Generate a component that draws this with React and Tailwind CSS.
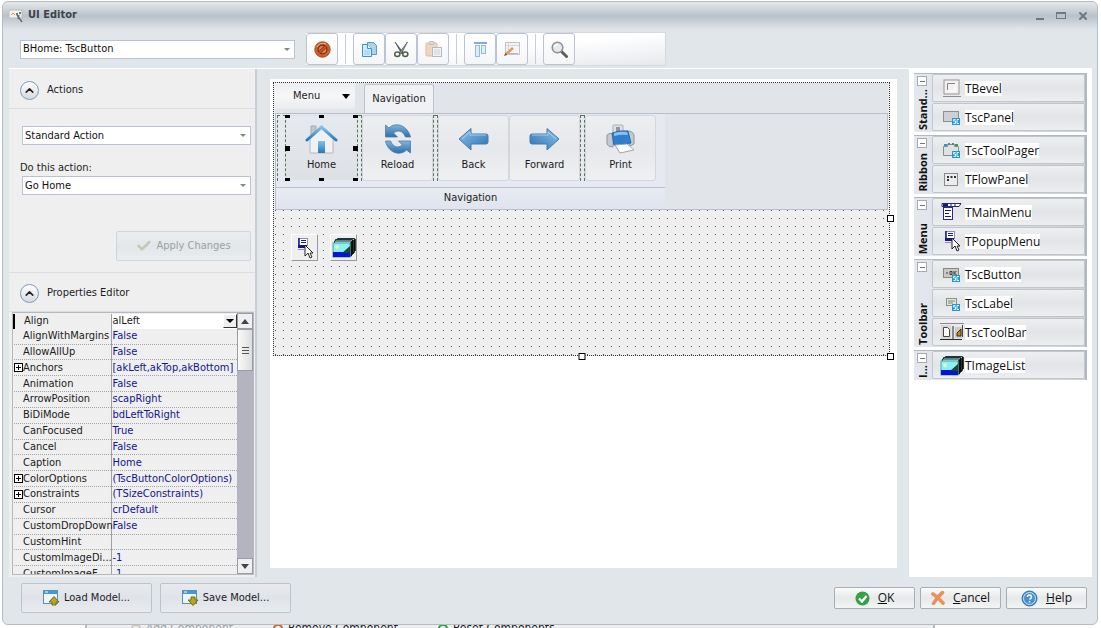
import { ChevronUp, X, Check } from "lucide-react";

const properties = [
  ["AlignWithMargins", "False"],
  ["AllowAllUp", "False"],
  ["Anchors", "[akLeft,akTop,akBottom]", true],
  ["Animation", "False"],
  ["ArrowPosition", "scapRight"],
  ["BiDiMode", "bdLeftToRight"],
  ["CanFocused", "True"],
  ["Cancel", "False"],
  ["Caption", "Home"],
  ["ColorOptions", "(TscButtonColorOptions)", true],
  ["Constraints", "(TSizeConstraints)", true],
  ["Cursor", "crDefault"],
  ["CustomDropDown", "False"],
  ["CustomHint", ""],
  ["CustomImageDi...", "-1"],
  ["CustomImageF...", "-1"],
];

/* ---------- icons ---------- */

const AppIcon = () => (
  <svg width="15" height="14" viewBox="0 0 15 14">
    <rect x="0" y="1" width="13" height="8" fill="#f3f1ea" stroke="#b9bcc0" />
    <path d="M2 6l2-2 2 2" stroke="#e8924a" fill="none" />
    <path d="M7 5h2M10 4h2" stroke="#6c7a88" strokeWidth="2" />
    <path d="M8 6l5 7M10 6l-1 4" stroke="#6a6d70" strokeWidth="1.5" />
  </svg>
);

const BanIcon = () => (
  <svg width="17" height="17" viewBox="0 0 17 17">
    <circle cx="8.5" cy="8.5" r="7.7" fill="#cf5f2b" stroke="#a04a20" />
    <circle cx="8.5" cy="8.5" r="4.4" fill="#dd8350" stroke="#7c3113" strokeWidth="1.2" />
    <path d="M5.4 11.6l6.2-6.2" stroke="#7c3113" strokeWidth="3" />
    <path d="M5.4 11.6l6.2-6.2" stroke="#cf5f2b" strokeWidth="1.4" />
    <path d="M3 6a6.5 6.5 0 0 1 9-3" stroke="#f2b48c" fill="none" />
  </svg>
);

const CopyIcon = () => (
  <svg width="17" height="17" viewBox="0 0 17 17">
    <path d="M6.5 1.5h6l3 3v9h-9z" fill="#a9d3ee" stroke="#5b9bc8" />
    <path d="M1.5 3.500h5l4 4v8h-9z" fill="#d3ebf9" stroke="#4a8fc2" />
    <path d="M6.5 3.500v4h4" fill="#fff" stroke="#4a8fc2" />
    <path d="M3 9h6v5H3z" fill="#b4daf2" />
  </svg>
);

const CutIcon = () => (
  <svg width="17" height="17" viewBox="0 0 17 17">
    <path d="M2 1l8.500 11-2 .5z" fill="#555d5a" stroke="#3c4442" strokeWidth="0.6" />
    <path d="M14.500 1L6 12l2.500.5z" fill="#8d9593" stroke="#3c4442" strokeWidth="0.6" />
    <ellipse cx="4.300" cy="13.300" rx="2.600" ry="2.200" fill="none" stroke="#4c6049" strokeWidth="1.500" />
    <ellipse cx="12.300" cy="13.300" rx="2.600" ry="2.200" fill="none" stroke="#4c6049" strokeWidth="1.500" />
  </svg>
);

const PasteIcon = () => (
  <svg width="17" height="17" viewBox="0 0 17 17">
    <rect x="1" y="2" width="11" height="13" rx="1" fill="#f0d6bc" stroke="#e0bb9c" />
    <rect x="4" y="0.5" width="5" height="3" rx="1" fill="#d8dadd" stroke="#bcbfc3" />
    <rect x="7.5" y="6.5" width="9" height="9" fill="#f2f3f4" stroke="#b6babf" />
    <path d="M9 9h6M9 11h6M9 13h6" stroke="#cfd2d5" />
  </svg>
);

const AlignIcon = () => (
  <svg width="15" height="15" viewBox="0 0 15 15">
    <path d="M1 1h13" stroke="#7eb0da" strokeWidth="2" />
    <rect x="2.500" y="3.500" width="4" height="11" fill="#dcedfa" stroke="#8fbce0" />
    <rect x="8.500" y="3.500" width="4" height="8" fill="#dcedfa" stroke="#8fbce0" />
  </svg>
);

const DesignIcon = () => (
  <svg width="17" height="16" viewBox="0 0 17 16">
    <rect x="1.500" y="1.500" width="14" height="12" fill="#f4f3f5" stroke="#c4c2c8" />
    <path d="M4.500 2v11M2 4.500h13" stroke="#d6d5da" />
    <path d="M2 13l7-6" stroke="#e29a56" strokeWidth="2.500" />
    <path d="M0 15l1.500-3L3 14z" fill="#6b4a2a" />
    <path d="M4 12.500h10" stroke="#c3b3bf" />
  </svg>
);

const FindIcon = () => (
  <svg width="17" height="17" viewBox="0 0 17 17">
    <path d="M10.500 10.500l5 5" stroke="#5b5f58" strokeWidth="3" strokeLinecap="round" />
    <circle cx="6.500" cy="6.500" r="5.300" fill="#e6eaec" stroke="#8c9194" strokeWidth="1.500" />
    <path d="M3.500 6a3.500 3.500 0 0 1 3-2.500" stroke="#fff" fill="none" strokeWidth="1.500" />
  </svg>
);

const HomeIcon = () => (
  <svg width="33" height="30" viewBox="0 0 33 30">
    <defs>
      <linearGradient id="homeBlue" x1="0" y1="0" x2="0" y2="1">
        <stop offset="0" stopColor="#7fc4f0" />
        <stop offset="1" stopColor="#2478bd" />
      </linearGradient>
    </defs>
    <path d="M6 2h5v9H6z" fill="#c3c6c9" stroke="#a9acaf" />
    <path d="M5 15L16.500 5 28 15v14H5z" fill="#f0f1f3" stroke="#b4b8bc" />
    <path d="M2 16L16.500 3 31 16" fill="none" stroke="url(#homeBlue)" strokeWidth="3" strokeLinecap="round" />
    <rect x="13" y="17" width="7" height="12" fill="url(#homeBlue)" />
  </svg>
);

const ReloadIcon = () => (
  <svg width="28" height="32" viewBox="0 0 28 32">
    <defs>
      <linearGradient id="arrowBlue" x1="0" y1="0" x2="0" y2="1">
        <stop offset="0" stopColor="#7fb4dc" />
        <stop offset="1" stopColor="#2f6cab" />
      </linearGradient>
    </defs>
    <path d="M1.500 2v12h12l-4-4c4-3 9-3 12 4h5C24 3 12-2 5 5z" fill="url(#arrowBlue)" stroke="#4c7ba8" strokeWidth="0.800" />
    <path d="M26.500 30V18h-12l4 4c-4 3-9 3-12-4h-5c2 11 14 16 21 9z" fill="url(#arrowBlue)" stroke="#4c7ba8" strokeWidth="0.800" />
  </svg>
);

const ArrowIcon = ({ flip }) => (
  <svg width="31" height="25" viewBox="0 0 31 25" className={flip ? "-scale-x-100" : ""}>
    <defs>
      <linearGradient id="backBlue" x1="0" y1="0" x2="1" y2="1">
        <stop offset="0" stopColor="#8fc8ee" />
        <stop offset="1" stopColor="#2a6cae" />
      </linearGradient>
    </defs>
    <path
      d="M1 12L13 1.500V7h15q2 0 2 2v6q0 2-2 2H13v6z"
      fill="url(#backBlue)"
      stroke="#4a78a6"
      strokeLinejoin="round"
    />
    <path d="M4 12l8-7v3h16" fill="none" stroke="#b4dbf4" strokeWidth="0.800" />
  </svg>
);

const PrintIcon = () => (
  <svg width="30" height="30" viewBox="0 0 30 30">
    <path d="M7 2q0-1 1-1h8q1 0 1 1v8H7z" fill="#dfe2e5" stroke="#a9aeb4" />
    <path d="M10 3h4v6h-4z" fill="#8f959c" />
    <path d="M1 11q3-3 6-1v13q-5 0-6-3z" fill="#c3c9d0" stroke="#8e98a4" />
    <path d="M21 7q6 0 7 4v9l-4 2z" fill="#c3c9d0" stroke="#8e98a4" />
    <path d="M6 9q8-3 16-2l3 12-17 2z" fill="#2f7fd0" stroke="#2a68ab" />
    <path d="M8 9q7-2 13-1l1 3q-7-1-14 1z" fill="#8cc1ee" />
    <path d="M9 21l12-1 7 6-14 3z" fill="#fff" stroke="#9fa5ac" />
  </svg>
);

const MenuIcon = () => (
  <svg width="22" height="20" viewBox="0 0 22 20">
    <path d="M1 1.500h19l-2 3H1z" fill="#fff" stroke="#2a2a6e" />
    <path d="M2 3h5" stroke="#15158c" strokeWidth="2" />
    <path d="M9 3h2M13 3h2" stroke="#15158c" />
    <rect x="2.500" y="5.500" width="9" height="12" fill="#fff" stroke="#2a2a8c" />
    <path d="M4 8.500h6M4 11.500h4M4 14.500h6" stroke="#15158c" />
  </svg>
);

const PopupIcon = () => (
  <svg width="20" height="22" viewBox="0 0 20 22">
    <rect x="3.500" y="1.500" width="9" height="7" fill="#fff" stroke="#8d8db0" />
    <path d="M4 1v8" stroke="#15158c" strokeWidth="1.500" />
    <path d="M6 3.500h5M6 5.500h5" stroke="#15158c" />
    <path d="M3 8h9v3H3z" fill="#15158c" />
    <path d="M3 12.500h6" stroke="#8d8db0" />
    <path d="M10 8v11l3-3 2 5 2-1-2-4h3z" fill="#fff" stroke="#222" />
  </svg>
);

const ImageListIcon = () => (
  <svg width="24" height="21" viewBox="0 0 24 21">
    <path d="M5.500 1.500h17v14h-17z" fill="#9bd0cf" stroke="#1d3438" />
    <path d="M3.500 2.500h17v15h-17z" fill="#9bd0cf" stroke="#1d3438" />
    <path d="M2.500 4h17v15h-17z" fill="#b5e6e4" stroke="#1d3438" />
    <path d="M21 3v14M19 5v14M23 2v12" stroke="#000" strokeWidth="1.500" />
    <rect x="1" y="6" width="17" height="14" fill="#8af2f4" stroke="#4aa6a8" />
    <path d="M18 9v7h-8z" fill="#1f4a32" />
    <path d="M1 15h9l4 1h4v4H1z" fill="#0a12d8" />
    <path d="M5 8v4M3 10h4" stroke="#fdf6b0" strokeWidth="1.500" />
  </svg>
);

const ScBadge = () => (
  <>
    <rect x="9" y="9" width="8" height="7" fill="#1f9ad8" />
    <path d="M12.500 10.500h-2v1.500h2v2.500h-2M16 10.500h-2v4h2" stroke="#fff" strokeWidth="0.900" fill="none" />
  </>
);

const PanelIcon = () => (
  <svg width="17" height="17" viewBox="0 0 17 17">
    <rect x="0.500" y="2.500" width="15" height="10" fill="#cfd0d1" stroke="#8d9093" />
    <ScBadge />
  </svg>
);

const BevelIcon = () => (
  <svg width="20" height="19" viewBox="0 0 20 19">
    <rect x="2" y="1" width="15" height="14" fill="#f2f2f2" stroke="#9b9499" />
    <path d="M5.500 11V4.500H13" stroke="#8a8388" fill="none" />
    <path d="M13 5v7H6" stroke="#fff" fill="none" />
    <path d="M1 17.500h18" stroke="#918a90" />
  </svg>
);

const PagerIcon = () => (
  <svg width="17" height="17" viewBox="0 0 17 17">
    <path d="M0.500 4.500h4v-2h7v2h4v9H0.500z" fill="#dfe1e3" stroke="#8a8e92" />
    <path d="M1 3h3" stroke="#1f9ad8" strokeWidth="2" />
    <path d="M12 3h3" stroke="#35a050" strokeWidth="2" />
    <path d="M5 2h2M9 2h2" stroke="#777" strokeWidth="2" />
    <ScBadge />
  </svg>
);

const FlowIcon = () => (
  <svg width="17" height="15" viewBox="0 0 17 15">
    <rect x="1.500" y="1.500" width="13" height="12" fill="#ececec" stroke="#888b8f" />
    <path d="M4 5h2M7.500 5h2M11 5h2M4 8h2" stroke="#333" strokeWidth="2" />
  </svg>
);

const ButtonIcon = () => (
  <svg width="17" height="17" viewBox="0 0 17 17">
    <rect x="0.500" y="2.500" width="15" height="9" fill="#c9c8c4" stroke="#85868a" />
    <path d="M3 7h2M7 5.500h2v3H7zM11 5v4M13.500 5l-2 2 2 2" stroke="#3f3a30" fill="none" />
    <ScBadge />
  </svg>
);

const LabelIcon = () => (
  <svg width="17" height="17" viewBox="0 0 17 17">
    <rect x="3.500" y="3.500" width="10" height="7" fill="#e2e5dc" stroke="#8b9189" />
    <path d="M5 6h7M5 8h5" stroke="#7e857c" />
    <ScBadge />
  </svg>
);

const ToolBarIcon = () => (
  <svg width="24" height="18" viewBox="0 0 24 18">
    <path d="M0 0.500h24" stroke="#8d8a8c" />
    <rect x="1" y="2" width="10" height="14" fill="#d7d5d5" />
    <path d="M3.500 4.500h4l2 2v7h-6z" fill="#fff" stroke="#444" />
    <path d="M13 3v14M0 16.500h22" stroke="#2b2b2b" />
    <rect x="15" y="4" width="7" height="11" fill="#cfccc8" />
    <path d="M17 10l4-4v7h-4z" fill="#c08a1a" stroke="#3a2a10" />
    <path d="M22.500 2v12" stroke="#444" />
  </svg>
);

const ModelIcon = ({ down }) => (
  <svg width="17" height="16" viewBox="0 0 17 16">
    <rect x="0.500" y="0.500" width="14" height="13" fill="#eef6fb" stroke="#5b8fb4" />
    <path d="M1 2.500h13" stroke="#3f9bd6" strokeWidth="3" />
    <path d="M2 2h3" stroke="#fff" />
    {down ? (
      <path d="M9 7h4v3h3l-5 5.500L6 10h3z" fill="#c2a419" stroke="#66701c" />
    ) : (
      <path d="M9 15h4v-3h3l-5-5.500L6 12h3z" fill="#c2a419" stroke="#66701c" />
    )}
  </svg>
);

const OkIcon = () => (
  <svg width="15" height="15" viewBox="0 0 15 15">
    <circle cx="7.500" cy="7.500" r="7" fill="#35a046" />
    <path d="M4 7.500l3 3 4.500-5.500" stroke="#fff" strokeWidth="2.200" fill="none" />
  </svg>
);

const CancelIcon = () => (
  <svg width="14" height="14" viewBox="0 0 14 14">
    <path d="M2 3q5 3 10 9M11.500 1.500Q6 6 2.500 12.500" stroke="#e8935a" strokeWidth="3.600" strokeLinecap="round" fill="none" />
  </svg>
);

const HelpIcon = () => (
  <svg width="17" height="17" viewBox="0 0 17 17">
    <circle cx="8.500" cy="8.500" r="7.500" fill="#4a90cf" stroke="#2f6fa9" />
    <circle cx="8.500" cy="8.500" r="6" fill="none" stroke="#c8e2f5" />
    <path d="M6.500 7q0-2 2-2t2 2q0 1-2 2.500M8.500 11v1.500" stroke="#fff" strokeWidth="1.500" fill="none" />
  </svg>
);

const palette = [
  { name: "Stand...", items: [["TBevel", BevelIcon], ["TscPanel", PanelIcon]] },
  { name: "Ribbon", items: [["TscToolPager", PagerIcon], ["TFlowPanel", FlowIcon]] },
  { name: "Menu", items: [["TMainMenu", MenuIcon], ["TPopupMenu", PopupIcon]] },
  { name: "Toolbar", items: [["TscButton", ButtonIcon], ["TscLabel", LabelIcon], ["TscToolBar", ToolBarIcon]] },
  { name: "I...", items: [["TImageList", ImageListIcon]] },
];

/* ---------- small parts ---------- */

const Combo = ({ id, label, value, className }) => (
  <div className={`relative ${className}`}>
    <select
      id={id}
      aria-label={label}
      className="block h-[19px] w-full appearance-none border border-[#b9c3d3] bg-white pl-0.5 pr-5 leading-4 text-[#111] outline-none"
    >
      <option>{value}</option>
    </select>
    <span className="pointer-events-none absolute right-[5px] top-2 border-x-[3px] border-t-[3px] border-x-transparent border-t-[#7a8793]" />
  </div>
);

const SectionHeader = ({ title }) => (
  <div className="flex h-[39px] shrink-0 items-center gap-2 border-b border-[#dcdee1] pl-[11px] pt-0.5">
    <button
      aria-label={`Collapse ${title}`}
      className="flex h-[19px] w-[19px] items-center justify-center rounded-full border border-[#7d9bb8] bg-gradient-to-b from-white to-[#d5dae0] text-[#222]"
    >
      <ChevronUp size={13} strokeWidth={3} />
    </button>
    <h2>{title}</h2>
  </div>
);

const ToolButton = ({ label, children }) => (
  <button
    aria-label={label}
    className="flex h-8 w-8 items-center justify-center rounded-[3px] border border-[#bcc3d2] bg-gradient-to-b from-white to-[#f4f5f7]"
  >
    {children}
  </button>
);

const ToolDivider = () => <div className="mx-[7px] h-[30px] w-px bg-[#c9cdd6]" />;

const RibbonSeparator = ({ wide }) => (
  <div
    className={`h-[66px] shrink-0 border-x border-t border-dashed border-[#5d7658] ${wide ? "w-[9px]" : "w-[5px]"}`}
  />
);

const RibbonButton = ({ label, selected, children }) => (
  <button
    className={`relative flex h-[66px] w-[71px] shrink-0 flex-col items-center justify-end gap-[3px] rounded-[3px] border pb-2 ${
      selected
        ? "border-transparent bg-gradient-to-b from-[#e6e9ed] to-[#dde1e6]"
        : "border-[#d3d7dd] bg-gradient-to-b from-[#eceef0] via-[#e6e8eb] to-[#eff0f2]"
    }`}
  >
    <span className="flex h-8 items-center">{children}</span>
    <span className="leading-[14px]">{label}</span>
    {selected && (
      <>
        <i className="absolute -left-0.5 -top-px h-[3px] w-[5px] bg-black" />
        <i className="absolute -top-px left-8 h-[3px] w-[5px] bg-black" />
        <i className="absolute -right-0.5 -top-px h-[3px] w-[5px] bg-black" />
        <i className="absolute -left-0.5 top-[30px] h-[5px] w-[5px] bg-black" />
        <i className="absolute -right-0.5 top-[30px] h-[5px] w-[5px] bg-black" />
        <i className="absolute -bottom-px -left-0.5 h-[3px] w-[5px] bg-black" />
        <i className="absolute -bottom-px left-8 h-[3px] w-[5px] bg-black" />
        <i className="absolute -bottom-px -right-0.5 h-[3px] w-[5px] bg-black" />
      </>
    )}
  </button>
);

const FooterButton = ({ hotkey, rest, children }) => (
  <button className="flex h-[22px] w-[81px] items-center justify-center gap-2 rounded-[2px] border border-[#a9aeb3] bg-gradient-to-b from-[#fafbfb] via-[#e6e8e9] to-[#f4f5f5] font-['Open_Sans','Noto_Sans',sans-serif] text-[12px] leading-4 text-[#111]">
    {children}
    <span>
      <u>{hotkey}</u>
      {rest}
    </span>
  </button>
);

/* ---------- regions ---------- */

const TitleBar = () => (
  <header className="flex h-7 shrink-0 items-center gap-1 rounded-t-md bg-gradient-to-b from-[#e6e9eb] via-[#b9c1c9] to-[#e2e6ea] pl-1.5 pr-2 pb-px">
    <AppIcon />
    <h1 className="font-bold text-[#3d424c]">UI Editor</h1>
    <div className="ml-auto flex items-center gap-[11px] text-[#6d7983]">
      <button aria-label="Minimize" className="flex h-[9px] w-[9px] items-end">
        <span className="h-0.5 w-2 bg-[#6d7983]" />
      </button>
      <button aria-label="Maximize" className="h-[7px] w-[10px] border border-t-2 border-[#6d7983]" />
      <button aria-label="Close">
        <X size={12} strokeWidth={4} />
      </button>
    </div>
  </header>
);

const Toolbar = () => (
  <div className="flex h-[38px] shrink-0 items-center pl-[17px]">
    <Combo label="Component" value="BHome: TscButton" className="w-[275px]" />
    <div className="ml-[11px] flex w-[360px] items-center border-y border-r border-[#d5d9df] bg-gradient-to-br from-white via-white to-[#e6e9ed]">
      <ToolButton label="Delete">
        <BanIcon />
      </ToolButton>
      <ToolDivider />
      <ToolButton label="Copy">
        <CopyIcon />
      </ToolButton>
      <ToolButton label="Cut">
        <CutIcon />
      </ToolButton>
      <ToolButton label="Paste">
        <PasteIcon />
      </ToolButton>
      <ToolDivider />
      <ToolButton label="Align">
        <AlignIcon />
      </ToolButton>
      <ToolButton label="Design">
        <DesignIcon />
      </ToolButton>
      <ToolDivider />
      <ToolButton label="Find">
        <FindIcon />
      </ToolButton>
    </div>
  </div>
);

const PropertyGrid = () => (
  <div className="mb-0.5 ml-[3px] mr-px flex min-h-0 flex-1 border border-[#b5b8bf]">
    <div className="min-w-0 flex-1 overflow-hidden">
      <table className="mt-px h-[268px] w-full table-fixed border-collapse text-[#1a1a1a]">
        <tbody>
          <tr>
            <th scope="row" className="w-[97px] border-l-2 border-r border-l-black border-r-[#a0a0a0] p-0 pl-[9px] text-left font-normal leading-[14px]">
              Align
            </th>
            <td className="bg-white p-0 pl-px leading-[14px]">
              <div className="flex items-center justify-between">
                alLeft
                <button
                  aria-label="Open list"
                  className="flex h-[14px] w-[14px] items-center justify-center border border-l-white border-t-white border-b-[#333] border-r-[#333] bg-[#eee]"
                >
                  <span className="border-x-[4px] border-t-[4px] border-x-transparent border-t-black" />
                </button>
              </div>
            </td>
          </tr>
          {properties.map(([name, value, expandable]) => (
            <tr key={name} className="border-b border-dotted border-[#a5a5a5]">
              <th scope="row" className="border-r border-solid border-r-[#a0a0a0] p-0 text-left font-normal leading-[14px]">
                <div className="flex items-center whitespace-nowrap">
                  <span className="flex w-[9px] shrink-0">
                    {expandable && (
                      <span className="relative h-[9px] w-[9px] border border-black bg-white">
                        <i className="absolute left-px top-[3px] h-px w-[5px] bg-black" />
                        <i className="absolute left-[3px] top-px h-[5px] w-px bg-black" />
                      </span>
                    )}
                  </span>
                  {name}
                </div>
              </th>
              <td className="whitespace-nowrap p-0 pl-px leading-[14px] text-[#14148c]">{value}</td>
            </tr>
          ))}
        </tbody>
      </table>
    </div>
    <div className="flex w-4 shrink-0 flex-col bg-[#b3b4bf]">
      <button aria-label="Scroll up" className="flex h-4 items-center justify-center border border-[#999ca2] bg-[#eeeff0]">
        <span className="border-x-[4px] border-b-[5px] border-x-transparent border-b-[#444]" />
      </button>
      <div className="flex h-[42px] flex-col items-center justify-center gap-0.5 border border-[#999ca2] bg-gradient-to-r from-[#fafafa] to-[#dcdddf]">
        <span className="h-px w-[7px] bg-[#555]" />
        <span className="h-px w-[7px] bg-[#555]" />
        <span className="h-px w-[7px] bg-[#555]" />
      </div>
      <button aria-label="Scroll down" className="mt-auto flex h-4 items-center justify-center border border-[#999ca2] bg-[#eeeff0]">
        <span className="border-x-[4px] border-t-[5px] border-x-transparent border-t-[#444]" />
      </button>
    </div>
  </div>
);

const Sidebar = () => (
  <aside className="flex w-[248px] shrink-0 flex-col border-r-2 border-[#c8cdd8] bg-[#efefef] pt-px">
    <SectionHeader title="Actions" />
    <div className="flex flex-col border-b border-[#dcdee1] pb-[11px] pl-[13px] pr-1">
      <Combo label="Action type" value="Standard Action" className="mt-[17px] w-[229px]" />
      <label htmlFor="action" className="-ml-0.5 mt-[15px] leading-4">
        Do this action:
      </label>
      <Combo id="action" label="Do this action" value="Go Home" className="w-[229px]" />
      <button
        disabled
        className="mt-9 flex h-[30px] w-[135px] items-center justify-center gap-1 self-end rounded-[2px] border border-[#cdd6de] bg-gradient-to-b from-[#ebedee] via-[#e3e7ea] to-[#eaecee] text-[#9aa39e]"
      >
        <Check size={16} strokeWidth={4} className="text-[#c8c7b4]" />
        Apply Changes
      </button>
    </div>
    <SectionHeader title="Properties Editor" />
    <PropertyGrid />
  </aside>
);

const Ribbon = () => (
  <div className="bg-[#e1e5e9]">
    <div className="flex h-[30px] items-start">
      <button className="flex h-[26px] w-20 items-center justify-between bg-gradient-to-b from-[#eceef1] via-[#f7f7f8] to-[#e9ebee] pl-[18px] pr-[5px] pt-px">
        Menu
        <span className="border-x-[4px] border-t-[5px] border-x-transparent border-t-black" />
      </button>
      <button className="ml-[9px] mt-px flex h-[29px] w-[70px] items-center justify-center rounded-t-[3px] border border-b-0 border-[#bfc5d0] bg-[#eff1f3] pt-px">
        Navigation
      </button>
    </div>
    <div className="border border-[#b8bfca]">
      <div className="w-[389px] bg-gradient-to-b from-[#e6e9ed] to-[#e6e9f2]">
        <div className="flex h-[73px] items-start pl-px pt-px">
          <RibbonSeparator wide />
          <RibbonButton label="Home" selected>
            <HomeIcon />
          </RibbonButton>
          <RibbonSeparator />
          <RibbonButton label="Reload">
            <ReloadIcon />
          </RibbonButton>
          <RibbonSeparator />
          <RibbonButton label="Back">
            <ArrowIcon />
          </RibbonButton>
          <RibbonButton label="Forward">
            <ArrowIcon flip />
          </RibbonButton>
          <RibbonSeparator />
          <RibbonButton label="Print">
            <PrintIcon />
          </RibbonButton>
        </div>
        <div className="flex h-[22px] items-center justify-center border-t border-[#b8c2d0] bg-gradient-to-b from-[#e8ebf1] to-[#dfe4ef]">
          Navigation
        </div>
      </div>
    </div>
  </div>
);

const Canvas = () => (
  <main className="mb-[9px] ml-[13px] mt-[10px] min-w-0 flex-1 bg-white pl-[3px] pr-[7px] pt-[3px]">
    {/* form surface with its one-pixel snap grid */}
    <div className="relative h-[274px] border border-dotted border-[#333] bg-[#efefef] bg-[linear-gradient(to_right,#efefef_7px,transparent_7px),linear-gradient(to_bottom,#efefef_7px,#555_7px)] bg-[position:-6px_0px] bg-[size:8px_8px] px-px">
      <Ribbon />
      <div className="ml-4 mt-6 flex gap-3">
        <div className="flex h-[27px] w-[27px] items-center justify-center border border-b-[#999] border-r-[#999] border-l-white border-t-white bg-[#efefef]">
          <PopupIcon />
        </div>
        <div className="flex h-[27px] w-[27px] items-center justify-center border border-b-[#999] border-r-[#999] border-l-white border-t-white bg-[#efefef]">
          <ImageListIcon />
        </div>
      </div>
      <i className="absolute -right-[5px] top-[132px] h-[7px] w-[7px] border border-black bg-white" />
      <i className="absolute -bottom-[5px] -right-[5px] h-[7px] w-[7px] border border-black bg-white" />
      <i className="absolute -bottom-[5px] left-1/2 h-[7px] w-[7px] -translate-x-1/2 border border-black bg-white" />
    </div>
  </main>
);

const Palette = () => (
  <aside className="ml-3 flex w-[183px] shrink-0 flex-col gap-[3px] bg-white px-[5px] pt-1 font-['Open_Sans','Noto_Sans',sans-serif] text-[12px] text-[#111]">
    {palette.map((group) => (
      <section key={group.name} className="flex border-r-2 border-t border-[#b0b9c3] bg-gradient-to-r from-[#e4e7ee] to-[#ccd1d8]">
        <div className="relative flex w-[18px] shrink-0 items-end justify-center pb-0.5">
          <button
            aria-label={`Collapse ${group.name}`}
            className="absolute left-[3px] top-0.5 flex h-[10px] w-[10px] items-center justify-center border border-[#a7abb1] bg-white"
          >
            <span className="h-px w-[5px] bg-[#777]" />
          </button>
          <h3 className="rotate-180 text-[11px] font-bold leading-4 [writing-mode:vertical-rl]">{group.name}</h3>
        </div>
        <div className="flex flex-1 flex-col gap-px pb-px">
          {group.items.map(([name, Icon]) => (
            <button
              key={name}
              className="flex h-7 items-center rounded-[2px] border border-[#c2c6cc] bg-gradient-to-b from-[#eeeff1] via-[#e2e4e7] to-[#eceef0] pl-[5px]"
            >
              <span className="flex w-[27px] justify-center">
                <Icon />
              </span>
              <span className="bg-white leading-[15px]">{name}</span>
            </button>
          ))}
        </div>
      </section>
    ))}
  </aside>
);

const Footer = () => (
  <footer className="flex h-[47px] shrink-0 items-center pb-[5px] pl-[18px] pr-[10px]">
    <button className="flex h-[30px] w-[131px] items-center justify-center gap-1 rounded-[2px] border border-[#bcc3cf] bg-gradient-to-b from-[#e8eaed] via-[#dfe3e7] to-[#e9ebee]">
      <ModelIcon />
      Load Model...
    </button>
    <button className="ml-2 flex h-[30px] w-[131px] items-center justify-center gap-1 rounded-[2px] border border-[#bcc3cf] bg-gradient-to-b from-[#e8eaed] via-[#dfe3e7] to-[#e9ebee]">
      <ModelIcon down />
      Save Model...
    </button>
    <div className="ml-auto flex gap-[5px]">
      <FooterButton hotkey="O" rest="K">
        <OkIcon />
      </FooterButton>
      <FooterButton hotkey="C" rest="ancel">
        <CancelIcon />
      </FooterButton>
      <FooterButton hotkey="H" rest="elp">
        <HelpIcon />
      </FooterButton>
    </div>
  </footer>
);

export default function App() {
  return (
    <div className="flex h-screen flex-col overflow-hidden bg-white pt-px font-['DejaVu_Sans_Condensed','DejaVu_Sans',sans-serif] text-[11px] text-[#1c1c1c]">
      <div className="ml-0.5 mr-[3px] flex min-h-0 flex-1 flex-col rounded-md border border-[#b3bcc5] bg-[#e1e6ea]">
        <TitleBar />
        <Toolbar />
        <div className="ml-1.5 mr-[5px] flex min-h-0 flex-1 border-t border-white">
          <Sidebar />
          <Canvas />
          <Palette />
        </div>
        <Footer />
      </div>
      {/* window behind the editor */}
      <div className="ml-[85px] flex h-[3px] w-[850px] shrink-0 items-start gap-10 overflow-hidden border-x-2 border-[#b9bcc0] bg-[#eceef0] pl-11 text-[12px] leading-3">
        <div className="-mt-[3px] flex items-center gap-[5px] text-[#a0a5a8]">
          <span className="h-[9px] w-[10px] rounded-full border-2 border-[#cfc8ba]" />
          Add Component
        </div>
        <div className="-mt-[3px] flex items-center gap-[5px]">
          <span className="h-[9px] w-[10px] rounded-full border-2 border-[#d2622c]" />
          Remove Component
        </div>
        <div className="-mt-[3px] flex items-center gap-[5px]">
          <span className="h-[9px] w-[10px] rounded-full border-2 border-[#35a046]" />
          Reset Components
        </div>
      </div>
    </div>
  );
}
